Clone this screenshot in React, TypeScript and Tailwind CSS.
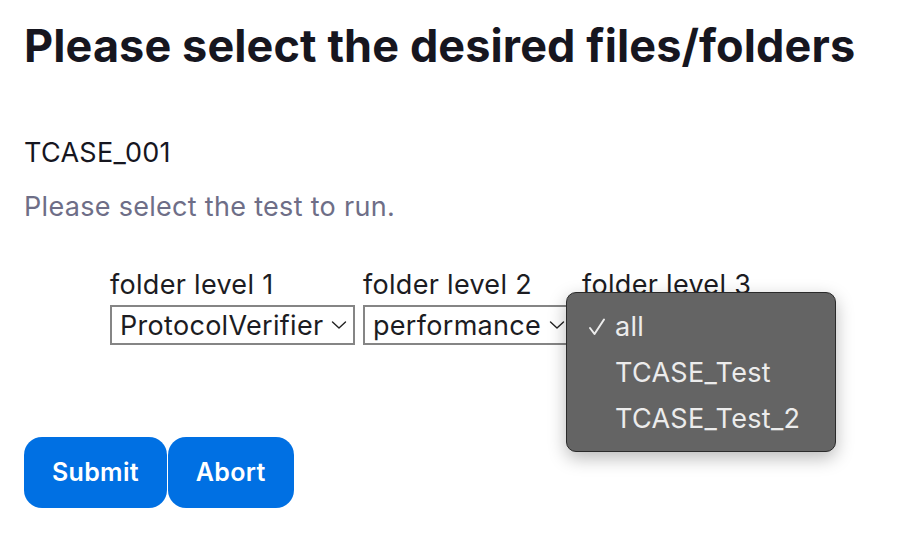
import React from "react";

function Chevron() {
  return (
    <svg width="16" height="10" viewBox="0 0 16 10" fill="none" className="shrink-0">
      <path d="M1.5 2l6.5 6 6.5-6" stroke="#222" strokeWidth="1.4" strokeLinecap="round" strokeLinejoin="round" />
    </svg>
  );
}

function FakeSelect({ value, width }: { value: string; width: string }) {
  return (
    <div
      className={`flex h-[40px] items-center justify-between gap-2 border-2 border-[#858585] bg-white pl-[8px] pr-[6px] text-[27px] leading-none tracking-[0.3px] text-[#1c1c22] ${width}`}
    >
      <span>{value}</span>
      <Chevron />
    </div>
  );
}

export default function App() {
  return (
    <div
      className="relative min-h-[554px] w-[914px] bg-white px-[24px] pt-[19px]"
      style={{ fontFamily: "Inter, 'Noto Sans', sans-serif" }}
    >
      <h1 className="whitespace-nowrap text-[45px] font-bold leading-[53px] tracking-[0.1px] text-[#16161f]">
        Please select the desired files/folders
      </h1>
      <div className="mt-[64px] text-[27px] leading-[33px] tracking-[0.3px] text-[#16161f]">TCASE_001</div>
      <p className="mt-[21px] text-[27px] leading-[33px] tracking-[0.3px] text-[#6e6e87]">
        Please select the test to run.
      </p>

      <div className="ml-[86px] mt-[45px] flex gap-[8px]">
        <div className="flex w-[245px] flex-col">
          <span className="text-[27px] leading-[33px] tracking-[0.3px] text-[#1c1c22]">folder level 1</span>
          <div className="mt-[4px]">
            <FakeSelect value="ProtocolVerifier" width="w-[245px]" />
          </div>
        </div>
        <div className="flex w-[211px] flex-col">
          <span className="text-[27px] leading-[33px] tracking-[0.3px] text-[#1c1c22]">folder level 2</span>
          <div className="mt-[4px]">
            <FakeSelect value="performance" width="w-[207px]" />
          </div>
        </div>
        <div className="flex flex-col">
          <span className="whitespace-nowrap text-[27px] leading-[33px] tracking-[0.3px] text-[#1c1c22]">
            folder level 3
          </span>
          <div className="mt-[4px]">
            <FakeSelect value="" width="w-[120px]" />
          </div>
        </div>
      </div>

      <div className="mt-[92px] flex gap-[1px]">
        <button className="h-[71px] rounded-[18px] bg-[#0070e3] px-[28px] text-[25px] font-semibold tracking-[0.3px] text-white">
          Submit
        </button>
        <button className="h-[71px] rounded-[18px] bg-[#0070e3] px-[28px] text-[25px] font-semibold tracking-[0.3px] text-white">
          Abort
        </button>
      </div>

      <div className="absolute left-[566px] top-[292px] w-[270px] rounded-[10px] border border-[#2a2a2a] bg-[#646464] pb-[9px] pt-[11px] shadow-[0_6px_18px_rgba(0,0,0,0.28)]">
        <div className="relative flex h-[46px] items-center pl-[48px] text-[27px] tracking-[0.3px] text-[#ececec]">
          <svg className="absolute left-[21px] top-[13px]" width="18" height="20" viewBox="0 0 18 20" fill="none">
            <path d="M2 11l4.5 6L16 2.5" stroke="#ececec" strokeWidth="2" strokeLinecap="round" strokeLinejoin="round" />
          </svg>
          all
        </div>
        <div className="flex h-[46px] items-center pl-[48px] text-[27px] tracking-[0.3px] text-[#ececec]">TCASE_Test</div>
        <div className="flex h-[46px] items-center pl-[48px] text-[27px] tracking-[0.3px] text-[#ececec]">TCASE_Test_2</div>
      </div>
    </div>
  );
}
